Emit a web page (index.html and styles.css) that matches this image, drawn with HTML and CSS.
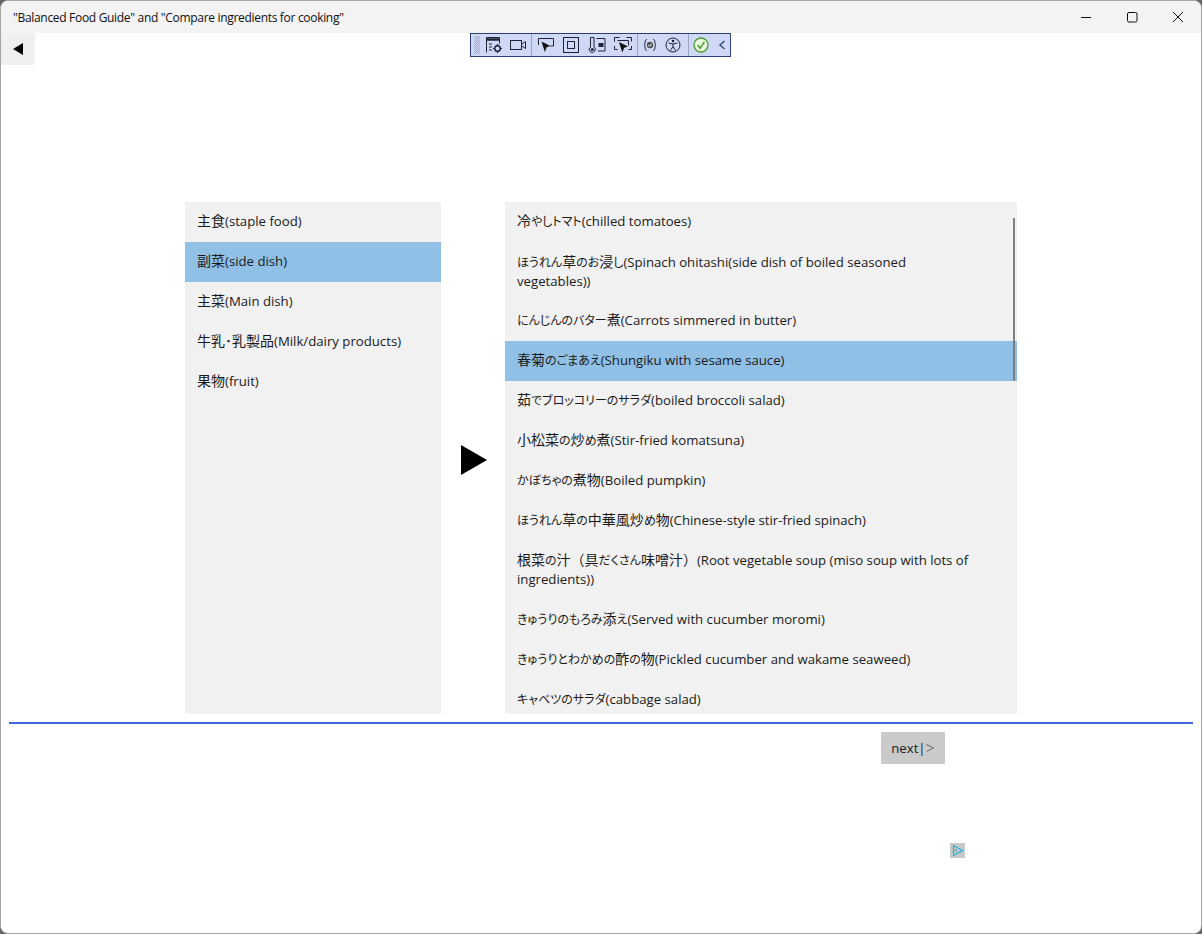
FILE: index.html
```html
<!DOCTYPE html>
<html lang="ja">
<head>
<meta charset="utf-8">
<title>Balanced Food Guide</title>
<link rel="stylesheet" href="styles.css">
</head>
<body>
<div class="window">
  <header class="titlebar">
    <span class="title">"Balanced Food Guide" and "Compare ingredients for cooking"</span>
    <div class="controls">
      <svg class="ctl" viewBox="0 0 46 32"><path d="M18 16.500h10" stroke="#111" fill="none"/></svg>
      <svg class="ctl" viewBox="0 0 46 32"><rect x="18.500" y="11.500" width="9.500" height="9.500" rx="1.500" stroke="#111" fill="none"/></svg>
      <svg class="ctl" viewBox="0 0 46 32"><path d="M18 11l10 10M28 11l-10 10" stroke="#111" fill="none"/></svg>
    </div>
  </header>
  <main class="content">
    <button class="back"><svg viewBox="0 0 12 14" width="12" height="14"><path d="M11 1v12L1 7z" fill="#000"/></svg></button>
    <div class="devbar">
      <span class="grip"></span>
      <div class="group group-a">
        <svg class="tool" viewBox="0 0 20 20"><path d="M2.500 17.500V2.500h13v6" fill="none" stroke="#1e2336"/><path d="M2.500 4.500h13" fill="none" stroke="#1e2336" stroke-width="2.500"/><path d="M5 9h3M5 12h3M5 15h3" stroke="#1e2336"/><circle cx="13.500" cy="13.500" r="2.800" fill="none" stroke="#1e2336" stroke-width="1.500"/><path d="M13.500 9v2M13.500 16v2M9 13.500h2M16 13.500h2" stroke="#1e2336" stroke-width="1.200"/></svg>
        <svg class="tool" viewBox="0 0 20 20"><rect x="2.500" y="5.500" width="11" height="9" fill="none" stroke="#1e2336"/><path d="M14 9l3.500-2.500v7L14 11" fill="none" stroke="#1e2336"/></svg>
      </div>
      <i class="sep sep-first"></i>
      <div class="group group-b">
        <svg class="tool" viewBox="0 0 20 20"><path d="M2.500 10V3.500h15V11h-3" fill="none" stroke="#1e2336"/><path d="M5.500 6.500l9 4.500-3.800 1.300-1.900 4.700z" fill="#111"/></svg>
        <svg class="tool" viewBox="0 0 20 20"><rect x="2.500" y="2.500" width="15" height="15" fill="none" stroke="#1e2336"/><rect x="6.500" y="6.500" width="7" height="7" fill="none" stroke="#1e2336"/></svg>
        <svg class="tool" viewBox="0 0 20 20"><path d="M3.500 2.500h3.500v9.500a3 3 0 1 1-3.500 0z" fill="none" stroke="#1e2336"/><circle cx="5.300" cy="14.500" r="1.500" fill="#1e2336"/><path d="M9.500 3.500h8.500v12.500h-7" fill="none" stroke="#1e2336"/><rect x="11.500" y="8" width="5" height="4" fill="#1e2336"/></svg>
        <svg class="tool" viewBox="0 0 20 20"><path d="M1.500 6.500v-4h5M13.500 2.500h5v4M1.500 11v3.500h3M18.500 11v3.500h-3M4.500 5.500h11v5" fill="none" stroke="#1e2336"/><path d="M6 7l9 4.500-3.800 1.300-1.900 4.700z" fill="#111"/></svg>
      </div>
      <i class="sep"></i>
      <div class="group group-c">
        <svg class="tool" viewBox="0 0 20 20"><path d="M7 4.500C4 4.500 6 9.500 4 10c2 .5 0 5.500 3 5.500M13 4.500c3 0 1 5 3 5.500-2 .5 0 5.500-3 5.500" fill="none" stroke="#1e2336"/><circle cx="10" cy="10" r="3.200" fill="#555"/><path d="M8.300 10l1.300 1.300 2-2.600" fill="none" stroke="#fff"/></svg>
        <svg class="tool" viewBox="0 0 20 20"><circle cx="10" cy="10" r="7" fill="none" stroke="#1e2336"/><circle cx="10" cy="6" r="1.300" fill="#1e2336"/><path d="M5.500 8l4.500 1 4.500-1M10 9v2.500l-2.500 4M10 11.500l2.500 4" fill="none" stroke="#1e2336"/></svg>
      </div>
      <i class="sep"></i>
      <div class="group group-d">
        <svg class="tool" viewBox="0 0 20 20"><circle cx="10" cy="10" r="7" fill="#e8f6df" stroke="#4aa02c" stroke-width="1.300"/><path d="M6.800 10l2.300 3.200 4.300-6.400" fill="none" stroke="#4aa02c" stroke-width="1.500"/></svg>
        <svg class="chev" viewBox="0 0 10 20"><path d="M7.500 6l-4.500 4 4.500 4" fill="none" stroke="#33497f" stroke-width="1.500"/></svg>
      </div>
    </div>
    <section class="stage">
      <ul class="list list-left">
        <li class="item"><span class="ja">主食</span>(staple food)</li>
        <li class="item selected"><span class="ja">副菜</span>(side dish)</li>
        <li class="item"><span class="ja">主菜</span>(Main dish)</li>
        <li class="item"><span class="ja">牛乳･乳製品</span>(Milk/dairy products)</li>
        <li class="item"><span class="ja">果物</span>(fruit)</li>
      </ul>
      <div class="pointer"><svg viewBox="0 0 26 30" width="26" height="30"><path d="M0 0l26 15L0 30z" fill="#000"/></svg></div>
      <div class="list-wrap">
        <ul class="list list-right">
          <li class="item"><span class="ja">冷</span><span class="kana">やしトマト</span>(chilled tomatoes)</li>
          <li class="item wrapped"><span class="kana">ほうれん</span><span class="ja">草</span><span class="kana">のお</span><span class="ja">浸</span><span class="kana">し</span>(Spinach ohitashi(side dish of boiled seasoned vegetables))</li>
          <li class="item"><span class="kana">にんじんのバター</span><span class="ja">煮</span>(Carrots simmered in butter)</li>
          <li class="item selected"><span class="ja">春菊</span><span class="kana">のごまあえ</span>(Shungiku with sesame sauce)</li>
          <li class="item"><span class="ja">茹</span><span class="kana">でブロッコリーのサラダ</span>(boiled broccoli salad)</li>
          <li class="item"><span class="ja">小松菜</span><span class="kana">の</span><span class="ja">炒</span><span class="kana">め</span><span class="ja">煮</span>(Stir-fried komatsuna)</li>
          <li class="item"><span class="kana">かぼちゃの</span><span class="ja">煮物</span>(Boiled pumpkin)</li>
          <li class="item"><span class="kana">ほうれん</span><span class="ja">草</span><span class="kana">の</span><span class="ja">中華風炒</span><span class="kana">め</span><span class="ja">物</span>(Chinese-style stir-fried spinach)</li>
          <li class="item"><span class="ja">根菜</span><span class="kana">の</span><span class="ja">汁（具</span><span class="kana">だくさん</span><span class="ja">味噌汁）</span>(Root vegetable soup (miso soup with lots of ingredients))</li>
          <li class="item"><span class="kana">きゅうりのもろみ</span><span class="ja">添</span><span class="kana">え</span>(Served with cucumber moromi)</li>
          <li class="item"><span class="kana">きゅうりとわかめの</span><span class="ja">酢</span><span class="kana">の</span><span class="ja">物</span>(Pickled cucumber and wakame seaweed)</li>
          <li class="item"><span class="kana">キャベツのサラダ</span>(cabbage salad)</li>
        </ul>
        <span class="scrollbar"></span>
      </div>
    </section>
    <hr class="rule">
    <div class="next-row"><button class="next">next|<span class="gt">&gt;</span></button></div>
    <div class="ad-row"><span class="ad"><svg viewBox="0 0 15 15" width="15" height="15"><path d="M3.500 2.500l9 5-9 5zM6 6v3" fill="none" stroke="#22b0d8" stroke-width="1.200"/></svg></span></div>
  </main>
  <span class="peek peek-left"></span>
  <span class="peek peek-right"></span>
</div>
</body>
</html>
```
FILE: styles.css
```css
* { box-sizing: border-box; }
html, body { margin: 0; padding: 0; }
body {
  width: 1202px;
  height: 934px;
  overflow: hidden;
  background: #666;
  font-family: "Open Sans", "Noto Sans CJK JP", sans-serif;
  font-size: 13.200px;
  color: #1a1a1a;
}
.window {
  position: relative;
  width: 1202px;
  height: 934px;
  display: flex;
  flex-direction: column;
  background: #fff;
  border: 1px solid #a6a6a6;
  border-radius: 8px;
  overflow: hidden;
}
.titlebar {
  height: 32px;
  flex: none;
  background: #f3f3f3;
  display: flex;
  align-items: center;
  justify-content: space-between;
  padding-left: 12px;
}
.title { font-size: 12px; letter-spacing: -0.310px; color: #111; }
.controls { display: flex; }
.ctl { width: 46px; height: 32px; display: block; }
.content { flex: 1; position: relative; min-height: 0; }
.back {
  position: absolute;
  left: 0;
  top: 0;
  width: 34px;
  height: 32px;
  border: 0;
  padding: 0;
  background: #f0f0f0;
  display: flex;
  align-items: center;
  justify-content: center;
}
.devbar {
  position: absolute;
  left: 469px;
  top: 0;
  width: 261px;
  height: 24px;
  background: #cfd9f5;
  border: 1px solid #2b3f78;
  display: flex;
  align-items: center;
  padding-left: 3px;
}
.grip {
  width: 6px;
  height: 18px;
  margin-right: 4px;
  flex: none;
  background: repeating-conic-gradient(#a3abc4 0 25%, transparent 0 50%) 0 0 / 2px 2px;
}
.group { display: flex; align-items: center; flex: none; }
.group-a { gap: 4px; }
.group-b { gap: 5.800px; margin-right: -1px; }
.group-c { gap: 3px; }
.group-d { gap: 6px; }
.tool { width: 20px; height: 20px; flex: none; display: block; }
.sep { width: 1px; height: 22px; background: #98a4c8; margin: 0 2px 0 5px; flex: none; }
.sep-first { margin: 0 3.500px 0 3px; }
.chev { width: 10px; height: 20px; flex: none; display: block; }
.stage {
  display: flex;
  align-items: stretch;
  height: 512px;
  margin: 169px 0 0 184px;
}
.list {
  list-style: none;
  margin: 0;
  padding: 0;
  background: #f1f1f1;
  height: 512px;
  overflow: hidden;
}
.list-left { width: 256px; }
.pointer {
  width: 64px;
  display: flex;
  align-items: center;
  justify-content: center;
  padding: 3px 0 0 2px;
}
.list-wrap { position: relative; width: 512px; }
.item { padding: 10px 44px 11px 12px; min-height: 40px; line-height: 19px; }
.wrapped { padding-top: 11px; padding-bottom: 10px; }
.list-left .item { padding-right: 12px; }
.ja { font-size: 14px; line-height: 0; }
.kana { font-size: 12px; line-height: 0; font-feature-settings: "palt"; }
.selected { background: #90c0e6; }
.scrollbar {
  position: absolute;
  right: 2px;
  top: 16px;
  width: 2px;
  height: 163px;
  background: #808080;
}
.rule {
  height: 2px;
  border: 0;
  margin: 8px 8px 0 8px;
  background: #4169e1;
}
.next-row { display: flex; padding: 8px 0 0 880px; }
.next {
  width: 64px;
  height: 32px;
  border: 0;
  padding: 0;
  background: #cacaca;
  font: inherit;
  color: #1a1a1a;
}
.gt { color: #555; font-size: 16px; line-height: 0; font-weight: 300; vertical-align: -1px; }
.ad-row { padding: 79px 0 0 949px; }
.ad { display: block; width: 15px; height: 15px; background: #c8c8c8; }
.ad svg { display: block; }
.peek {
  position: absolute;
  bottom: -1px;
  height: 1px;
  background: repeating-linear-gradient(90deg, #333 0 2px, transparent 2px 7px, #555 7px 8px, transparent 8px 13px);
}
.peek-left { left: 50px; width: 305px; }
.peek-right { left: 1067px; width: 105px; }
```
